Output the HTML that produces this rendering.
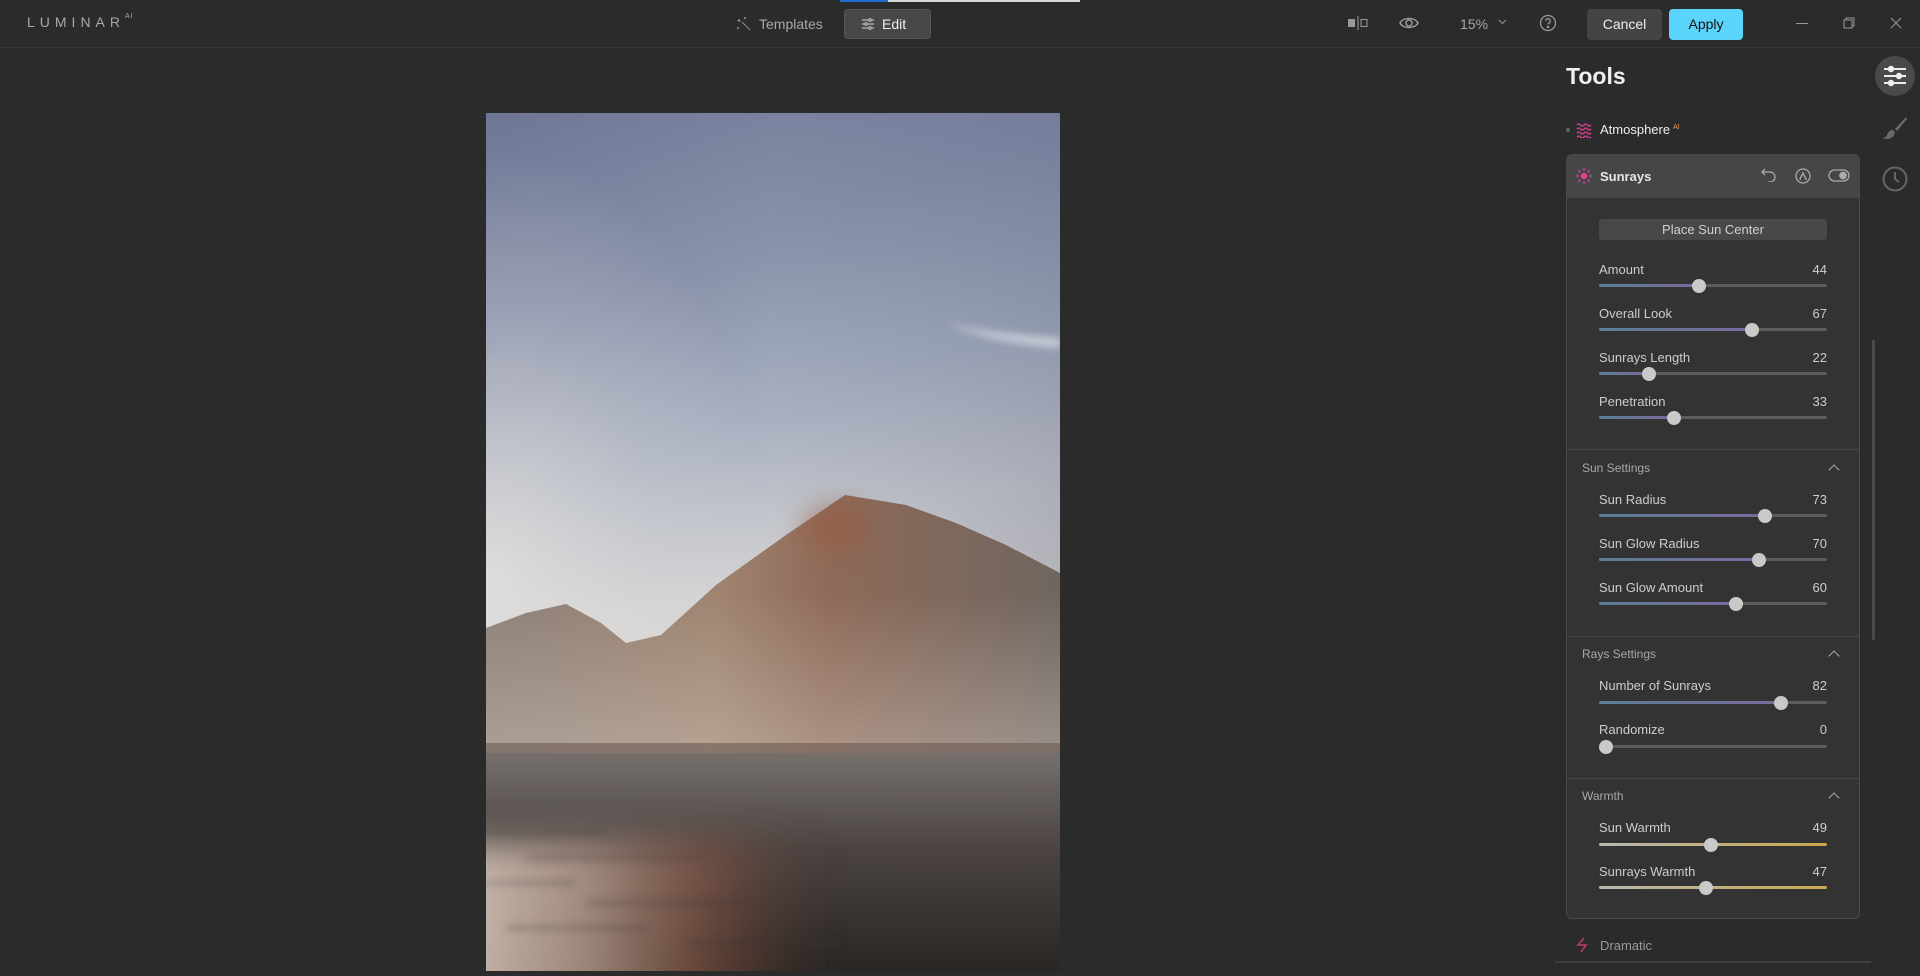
<!DOCTYPE html>
<html><head><meta charset="utf-8">
<style>
*{margin:0;padding:0;box-sizing:border-box}
body{width:1920px;height:976px;background:#2b2b2b;font-family:"Liberation Sans",sans-serif;overflow:hidden;position:relative;color:#d0d0d0}
.a{position:absolute}
.lbl{position:absolute;left:1599px;font-size:13px;color:#cdcdcd}
.val{position:absolute;right:93px;font-size:13px;color:#cdcdcd;text-align:right}
.tr{position:absolute;left:1599px;width:228px;height:3px;border-radius:2px;background:#5c5c5c}
.fill{position:absolute;left:0;top:0;height:3px;border-radius:2px;background:linear-gradient(90deg,#5b7f96,#7a6a9e)}
.th{position:absolute;width:14px;height:14px;border-radius:50%;background:#c9c9c9;top:-5.5px;margin-left:-7px}
.sec{position:absolute;left:1582px;font-size:12px;color:#a8a8a8}
.chev{position:absolute;left:1830px;width:8px;height:8px;border-left:1.5px solid #aaa;border-top:1.5px solid #aaa;transform:rotate(45deg)}
.div{position:absolute;left:1567px;width:292px;height:1px;background:#454545}
</style></head><body>
<div class="a" style="left:0;top:47px;width:1920px;height:1px;background:#383838"></div>
<div class="a" style="left:840px;top:0;width:48px;height:2px;background:#1e6fd0"></div>
<div class="a" style="left:888px;top:0;width:192px;height:2px;background:#d8d8d8"></div>
<div class="a" style="left:27px;top:14px;font-size:14px;letter-spacing:5px;color:#a8a8a8">LUMINAR<sup style="font-size:7px;letter-spacing:1px;position:relative;top:-3px">AI</sup></div>
<svg class="a" style="left:736px;top:16px" width="16" height="16" viewBox="0 0 16 16" fill="none" stroke="#888" stroke-width="1.2"><path d="M6 6l8 8M3 3v3M1.5 4.5h3M9 1v2M8 2h2M2 11v2M1 12h2"/></svg>
<div class="a" style="left:759px;top:16px;font-size:14px;color:#a8a8a8">Templates</div>
<div class="a" style="left:844px;top:9px;width:87px;height:30px;background:#484848;border-radius:4px;border:1px solid #555"></div>
<svg class="a" style="left:861px;top:17px" width="14" height="14" viewBox="0 0 14 14" stroke="#bbb" stroke-width="1.2"><path d="M1 3h12M1 7h12M1 11h12"/><circle cx="9" cy="3" r="1.3" fill="#484848"/><circle cx="5" cy="7" r="1.3" fill="#484848"/><circle cx="9" cy="11" r="1.3" fill="#484848"/></svg>
<div class="a" style="left:882px;top:16px;font-size:14px;color:#f0f0f0">Edit</div>

<svg class="a" style="left:1347px;top:16px" width="22" height="14" viewBox="0 0 22 14"><rect x="1" y="3" width="7" height="8" fill="#999"/><path d="M11 0v14" stroke="#999"/><rect x="14" y="3.5" width="6" height="7" fill="none" stroke="#999"/></svg>
<svg class="a" style="left:1399px;top:15px" width="20" height="16" viewBox="0 0 20 16" fill="none" stroke="#999" stroke-width="1.5"><path d="M1 8c3-6 15-6 18 0c-3 6-15 6-18 0z"/><circle cx="10" cy="8" r="3"/></svg>
<div class="a" style="left:1460px;top:16px;font-size:14px;color:#a8a8a8">15%</div>
<svg class="a" style="left:1498px;top:19px" width="9" height="6" viewBox="0 0 9 6" fill="none" stroke="#999"><path d="M1 1l3.5 3.5L8 1"/></svg>
<svg class="a" style="left:1539px;top:14px" width="18" height="18" viewBox="0 0 18 18" fill="none" stroke="#999" stroke-width="1.3"><circle cx="9" cy="9" r="7.5"/><path d="M6.8 7a2.2 2.2 0 1 1 3 2c-.6.3-.8.7-.8 1.5"/><circle cx="9" cy="13" r=".6" fill="#999"/></svg>
<div class="a" style="left:1587px;top:9px;width:75px;height:31px;background:#444;border-radius:4px;font-size:14px;color:#eee;text-align:center;line-height:31px">Cancel</div>
<div class="a" style="left:1669px;top:9px;width:74px;height:31px;background:#5bd4fb;border-radius:4px;font-size:14px;color:#111;text-align:center;line-height:31px">Apply</div>
<div class="a" style="left:1796px;top:23px;width:12px;height:1px;background:#999"></div>
<svg class="a" style="left:1843px;top:17px" width="12" height="12" viewBox="0 0 12 12" fill="none" stroke="#999"><rect x="1" y="3" width="8" height="8"/><path d="M3 3V1h8v8H9"/></svg>
<svg class="a" style="left:1890px;top:17px" width="12" height="12" viewBox="0 0 12 12" stroke="#999"><path d="M1 1l10 10M11 1L1 11"/></svg>

<svg class="a" style="left:486px;top:113px" width="574" height="858" viewBox="0 0 574 858">
<defs>
<linearGradient id="sky" x1="0" y1="0" x2=".25" y2="1"><stop offset="0" stop-color="#6e7695"/><stop offset=".25" stop-color="#8890aa"/><stop offset=".45" stop-color="#a8b0c0"/><stop offset=".62" stop-color="#d0d0d2"/><stop offset=".75" stop-color="#e2ddd6"/></linearGradient>
<linearGradient id="skyr" x1="0" y1="0" x2="1" y2="0"><stop offset=".5" stop-color="#4a5478" stop-opacity="0"/><stop offset="1" stop-color="#4a5478" stop-opacity=".3"/></linearGradient>
<radialGradient id="sun" cx="0" cy=".54" r=".5"><stop offset="0" stop-color="#f4efe6" stop-opacity=".65"/><stop offset=".6" stop-color="#f4efe6" stop-opacity=".2"/><stop offset="1" stop-color="#f4efe6" stop-opacity="0"/></radialGradient>
<filter id="bs" x="-20%" y="-200%" width="140%" height="500%"><feGaussianBlur stdDeviation="4"/></filter>
<filter id="bm" x="-50%" y="-50%" width="200%" height="200%"><feGaussianBlur stdDeviation="12"/></filter>
<filter id="bw" x="-30%" y="-30%" width="160%" height="160%"><feGaussianBlur stdDeviation="18"/></filter>
<linearGradient id="mt" x1="0" y1="0" x2="1" y2="0"><stop offset="0" stop-color="#8c8078"/><stop offset=".4" stop-color="#9f8470"/><stop offset=".6" stop-color="#8e6a58"/><stop offset="1" stop-color="#6f6660"/></linearGradient>
<linearGradient id="fog" x1="0" y1="0" x2="0" y2="1"><stop offset="0" stop-color="#d8d0c8" stop-opacity="0"/><stop offset="1" stop-color="#d8d0c8" stop-opacity=".4"/></linearGradient>
<linearGradient id="wt" x1="0" y1="0" x2="0" y2="1"><stop offset="0" stop-color="#76706d"/><stop offset=".45" stop-color="#4a4341"/><stop offset="1" stop-color="#2a2624"/></linearGradient>
<linearGradient id="wl" x1="0" y1="0" x2="1" y2="0"><stop offset="0" stop-color="#e2d2c6"/><stop offset=".3" stop-color="#c4a898" stop-opacity=".8"/><stop offset=".55" stop-color="#a0604a" stop-opacity=".5"/><stop offset=".8" stop-color="#5a3a30" stop-opacity="0"/></linearGradient>
</defs>
<rect width="574" height="858" fill="url(#sky)"/>
<rect width="574" height="858" fill="url(#skyr)"/>
<rect width="574" height="858" fill="url(#sun)"/>
<path d="M460 210c40 10 80 12 114 15v10c-40-3-80-10-114-25z" fill="#dfe2ea" opacity=".7" filter="url(#bs)"/>
<path d="M0 515L40 500L80 491L115 510L140 530L175 522L230 472L300 422L359 382L420 392L470 410L520 432L574 460L574 640L0 640Z" fill="url(#mt)"/>
<ellipse cx="350" cy="415" rx="35" ry="25" fill="#9a5a42" opacity=".5" filter="url(#bm)"/>
<rect y="480" width="574" height="160" fill="url(#fog)"/>
<rect y="630" width="574" height="12" fill="#6a5a52" opacity=".6"/>
<rect y="640" width="574" height="218" fill="url(#wt)"/>
<path d="M-40 730L420 720L440 900L-40 900Z" fill="url(#wl)" filter="url(#bw)" opacity=".9"/>
<g stroke="#3a3432" stroke-width="4" opacity=".35" filter="url(#bs)"><path d="M0 720h120M40 745h180M0 770h90M100 790h160M20 815h140M200 830h150"/></g>
</svg>

<div class="a" style="left:1875px;top:56px;width:40px;height:40px;border-radius:50%;background:#4a4a4a"></div>
<svg class="a" style="left:1883px;top:65px" width="24" height="22" viewBox="0 0 24 22" stroke="#eee" stroke-width="2"><path d="M1 4h22M1 11h22M1 18h22"/><circle cx="8" cy="4" r="2.2" fill="#eee"/><circle cx="16" cy="11" r="2.2" fill="#eee"/><circle cx="8" cy="18" r="2.2" fill="#eee"/></svg>
<svg class="a" style="left:1882px;top:116px" width="26" height="24" viewBox="0 0 26 24" fill="#6a6a6a"><path d="M24 1L13 13l2 2L25 3z"/><path d="M11 14c-4 0-5 3-6 5s-3 3-5 3c5 2 12 1 13-6z"/></svg>
<svg class="a" style="left:1881px;top:165px" width="28" height="28" viewBox="0 0 28 28" fill="none" stroke="#666" stroke-width="2"><circle cx="14" cy="14" r="11.5"/><path d="M14 7v7l4 3"/></svg>
<div class="a" style="left:1872px;top:340px;width:3px;height:300px;background:#4a4a4a;border-radius:2px"></div>

<div class="a" style="left:1566px;top:63px;font-size:23px;font-weight:bold;color:#f0f0f0">Tools</div>
<div class="a" style="left:1566px;top:128px;width:4px;height:4px;border-radius:50%;background:#666"></div>
<svg class="a" style="left:1576px;top:122px" width="16" height="16" viewBox="0 0 16 16" fill="none" stroke="#e0409a" stroke-width="1.3"><path d="M1 3q2-2 3.5 0t3.5 0t3.5 0t3.5 0M1 7q2-2 3.5 0t3.5 0t3.5 0t3.5 0M1 11q2-2 3.5 0t3.5 0t3.5 0t3.5 0M1 15q2-2 3.5 0t3.5 0t3.5 0t3.5 0"/></svg>
<div class="a" style="left:1600px;top:122px;font-size:13px;color:#eee">Atmosphere<sup style="font-size:7px;color:#e89a50;margin-left:3px">AI</sup></div>

<div class="a" style="left:1566px;top:154px;width:294px;height:765px;background:#333;border:1px solid #4a4a4a;border-radius:6px"></div>
<div class="a" style="left:1567px;top:155px;width:292px;height:43px;background:#464646;border-radius:5px 5px 0 0"></div>
<svg class="a" style="left:1576px;top:168px" width="16" height="16" viewBox="0 0 16 16" stroke="#e0409a" stroke-width="1.3"><circle cx="8" cy="8" r="2.5" fill="#e0409a"/><path d="M8 0v3M8 13v3M0 8h3M13 8h3M2.3 2.3l2 2M11.7 11.7l2 2M2.3 13.7l2-2M11.7 4.3l2-2"/></svg>
<div class="a" style="left:1600px;top:169px;font-size:13px;font-weight:bold;color:#e6e6e6">Sunrays</div>
<svg class="a" style="left:1761px;top:168px" width="16" height="14" viewBox="0 0 16 14" fill="none" stroke="#aaa" stroke-width="1.3"><path d="M4 1L1 4l3 3M1 4h8a5 5 0 0 1 0 10H7"/></svg>
<svg class="a" style="left:1795px;top:168px" width="16" height="16" viewBox="0 0 16 16" fill="none" stroke="#aaa" stroke-width="1.3"><circle cx="8" cy="8" r="7"/><path d="M5 12c0-3 3-5 3-8c0 3 3 5 3 8"/></svg>
<svg class="a" style="left:1828px;top:169px" width="22" height="13" viewBox="0 0 22 13" fill="none" stroke="#aaa" stroke-width="1.3"><rect x="1" y="1" width="20" height="11" rx="5.5"/><circle cx="15" cy="6.5" r="3.2" fill="#aaa"/></svg>

<div class="a" style="left:1599px;top:219px;width:228px;height:21px;background:#484848;border-radius:3px;font-size:13px;color:#d0d0d0;text-align:center;line-height:21px">Place Sun Center</div>

<div class="lbl" style="top:262px">Amount</div><div class="val" style="top:262px">44</div>
<div class="tr" style="top:284px"><div class="fill" style="width:44%"></div><div class="th" style="left:44%"></div></div>
<div class="lbl" style="top:306px">Overall Look</div><div class="val" style="top:306px">67</div>
<div class="tr" style="top:328px"><div class="fill" style="width:67%"></div><div class="th" style="left:67%"></div></div>
<div class="lbl" style="top:350px">Sunrays Length</div><div class="val" style="top:350px">22</div>
<div class="tr" style="top:372px"><div class="fill" style="width:22%"></div><div class="th" style="left:22%"></div></div>
<div class="lbl" style="top:394px">Penetration</div><div class="val" style="top:394px">33</div>
<div class="tr" style="top:416px"><div class="fill" style="width:33%"></div><div class="th" style="left:33%"></div></div>

<div class="div" style="top:449px"></div>
<div class="sec" style="top:461px">Sun Settings</div><div class="chev" style="top:466px"></div>
<div class="lbl" style="top:492px">Sun Radius</div><div class="val" style="top:492px">73</div>
<div class="tr" style="top:514px"><div class="fill" style="width:73%"></div><div class="th" style="left:73%"></div></div>
<div class="lbl" style="top:536px">Sun Glow Radius</div><div class="val" style="top:536px">70</div>
<div class="tr" style="top:558px"><div class="fill" style="width:70%"></div><div class="th" style="left:70%"></div></div>
<div class="lbl" style="top:580px">Sun Glow Amount</div><div class="val" style="top:580px">60</div>
<div class="tr" style="top:602px"><div class="fill" style="width:60%"></div><div class="th" style="left:60%"></div></div>

<div class="div" style="top:636px"></div>
<div class="sec" style="top:647px">Rays Settings</div><div class="chev" style="top:652px"></div>
<div class="lbl" style="top:678px">Number of Sunrays</div><div class="val" style="top:678px">82</div>
<div class="tr" style="top:701px"><div class="fill" style="width:80%"></div><div class="th" style="left:80%"></div></div>
<div class="lbl" style="top:722px">Randomize</div><div class="val" style="top:722px">0</div>
<div class="tr" style="top:745px"><div class="th" style="left:3%"></div></div>

<div class="div" style="top:778px"></div>
<div class="sec" style="top:789px">Warmth</div><div class="chev" style="top:794px"></div>
<div class="lbl" style="top:820px">Sun Warmth</div><div class="val" style="top:820px">49</div>
<div class="tr" style="top:843px;background:linear-gradient(90deg,#b8b8b0,#c9a94e)"><div class="th" style="left:49%"></div></div>
<div class="lbl" style="top:864px">Sunrays Warmth</div><div class="val" style="top:864px">47</div>
<div class="tr" style="top:886px;background:linear-gradient(90deg,#b8b8b0,#c9a94e)"><div class="th" style="left:47%"></div></div>

<svg class="a" style="left:1576px;top:937px" width="14" height="16" viewBox="0 0 14 16" fill="none" stroke="#a83a6a" stroke-width="1.8"><path d="M8 1L2 8h8l-5 7"/></svg>
<div class="a" style="left:1600px;top:938px;font-size:13px;color:#9a9a9a">Dramatic</div>
<div class="a" style="left:1555px;top:961px;width:316px;height:2px;background:#3e3e3e"></div>
</body></html>
